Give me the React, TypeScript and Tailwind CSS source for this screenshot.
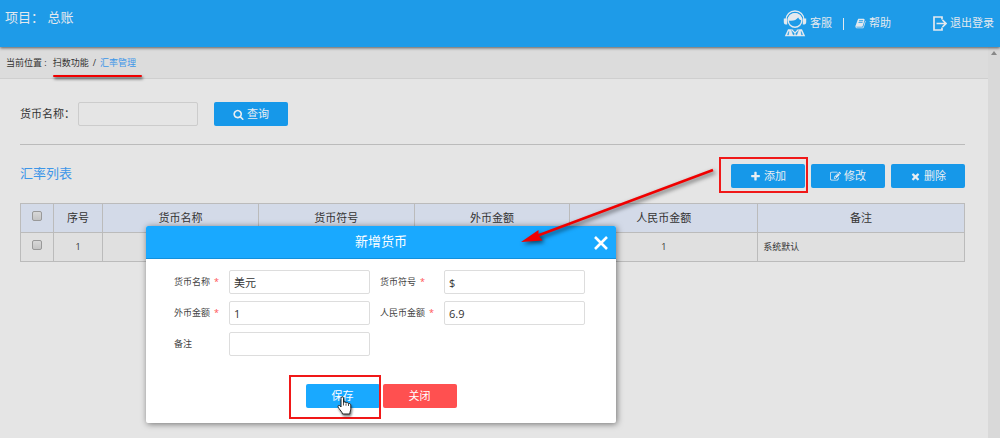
import { useState } from 'react'
import type { ReactNode } from 'react'

// ─── Icons ────────────────────────────────────────────────────────────────────

const ICON_PATHS = {
  search:
    'M1216 832q0-185-131.5-316.5t-316.5-131.5-316.5 131.5-131.5 316.5 131.5 316.5 316.5 131.5 316.5-131.5 131.5-316.5zm512 832q0 52-38 90t-90 38q-54 0-90-38l-343-342q-179 124-399 124-143 0-273.5-55.5t-225-150-150-225-55.5-273.5 55.5-273.5 150-225 225-150 273.5-55.5 273.5 55.5 225 150 150 225 55.5 273.5q0 220-124 399l343 343q37 37 37 90z',
  plus: 'M1600 736v192q0 40-28 68t-68 28h-416v416q0 40-28 68t-68 28h-192q-40 0-68-28t-28-68v-416h-416q-40 0-68-28t-28-68v-192q0-40 28-68t68-28h416v-416q0-40 28-68t68-28h192q40 0 68 28t28 68v416h416q40 0 68 28t28 68z',
  times:
    'M1490 1322q0 40-28 68l-136 136q-28 28-68 28t-68-28l-294-294-294 294q-28 28-68 28t-68-28l-136-136q-28-28-28-68t28-68l294-294-294-294q-28-28-28-68t28-68l136-136q28-28 68-28t68 28l294 294 294-294q28-28 68-28t68 28l136 136q28 28 28 68t-28 68l-294 294 294 294q28 28 28 68z',
  edit: 'M888 1184l116-116-152-152-116 116v56h96v96h56zm440-720q-16-16-33 1l-350 350q-17 17-1 33t33-1l350-350q17-17 1-33zm80 594v190q0 119-84.5 203.5t-203.5 84.5h-832q-119 0-203.5-84.5t-84.5-203.5v-832q0-119 84.5-203.5t203.5-84.5h832q63 0 117 25 15 7 18 23 3 17-9 29l-49 49q-14 14-32 8-23-6-45-6h-832q-66 0-113 47t-47 113v832q0 66 47 113t113 47h832q66 0 113-47t47-113v-126q0-13 9-22l64-64q15-15 35-7t20 29zm-96-738l288 288-672 672h-288v-288zm444 132l-92 92-288-288 92-92q28-28 68-28t68 28l152 152q28 28 28 68t-28 68z',
  book: 'M1703 478q40 57 18 129l-275 906q-19 64-76.5 107.5t-122.5 43.5h-923q-77 0-148.5-53.5t-99.5-131.5q-24-67-2-127 0-4 3-27t4-37q1-8-3-21.5t-3-19.5q2-11 8-21t16.5-23.5 16.5-23.5q23-38 45-91.5t30-91.5q3-10 .5-30t-.5-28q3-11 17-28t17-23q21-36 42-92t25-90q1-9-2.5-32t.5-28q4-13 22-30.5t22-22.5q19-26 42.5-84.5t27.5-96.5q1-8-3-25.5t-2-26.5q2-8 9-18t18-23 17-21q8-12 16.5-30.5t15-35 16-36 19.5-32 26.5-23.5 36-11.5 47.5 5.5l-1 3q38-9 51-9h761q74 0 114 56t18 130l-274 906q-36 119-71.5 153.5t-128.5 34.5h-869q-27 0-38 15-11 16-1 43 24 70 144 70h923q29 0 56-15.5t35-41.5l300-987q7-22 5-57 38 15 59 43zm-1064 2q-4 13 2 22.5t20 9.5h608q13 0 25.5-9.5t16.5-22.5l21-64q4-13-2-22.5t-20-9.5h-608q-13 0-25.5 9.5t-16.5 22.5zm-83 256q-4 13 2 22.5t20 9.5h608q13 0 25.5-9.5t16.5-22.5l21-64q4-13-2-22.5t-20-9.5h-608q-13 0-25.5 9.5t-16.5 22.5z',
}

type IconName = keyof typeof ICON_PATHS

function Icon({ name }: { name: IconName }) {
  return (
    <svg viewBox="0 0 1792 1792" className="size-[11px] shrink-0 fill-current" aria-hidden="true">
      <path d={ICON_PATHS[name]} />
    </svg>
  )
}

function AgentIcon() {
  return (
    <svg viewBox="0 0 24 27" className="h-[27px] w-6" fill="none" stroke="currentColor" aria-hidden="true">
      <path d="M3 10C3 4.500 7 1 12 1s9 3.500 9 9" strokeWidth="1.300" />
      <circle cx="12" cy="10.500" r="6.800" strokeWidth="1.400" />
      <path d="M5.200 10.500C4.800 5.500 8 3.200 12 3.200s7.200 2.300 6.800 7.300c-1.800-.4-3-1.500-3.600-3-2 2.500-5 4-10 3z" fill="currentColor" stroke="none" />
      <path d="M.8 8.500h3.400v6H2.600C1.400 14.500.8 13.500.8 12zM23.200 8.500h-3.400v6h1.600c1.200 0 1.800-1 1.800-2.500z" fill="currentColor" stroke="none" />
      <path d="M5 19.300h14l3.200 7H1.800z" fill="currentColor" stroke="none" />
      <path
        d="M8.200 19.300l2 5.500h3.600l2-5.500zM5.800 21.500l-1.300 3.300h1zM18.200 21.500l1.300 3.300h-1z"
        className="fill-[#1e9be8] stroke-[#1e9be8]"
        strokeWidth=".5"
      />
      <path d="M8.500 19.500l3.500 3.500 3.500-3.500M12 23v3" strokeWidth="1.200" />
    </svg>
  )
}

function LogoutIcon() {
  return (
    <svg viewBox="0 0 14 15" className="h-[15px] w-3.5" fill="none" stroke="currentColor" strokeWidth="1.700" aria-hidden="true">
      <path d="M9 3.500V1H1v13h8v-2.500M3.500 7.500H13M9.500 4l3.500 3.500L9.500 11" />
    </svg>
  )
}

function HandCursor() {
  return (
    <svg viewBox="0 0 15 19" className="pointer-events-none absolute left-[31px] top-3 h-[19px] w-[15px] drop-shadow-[1px_2px_1px_rgba(0,0,0,0.5)]" aria-hidden="true">
      <path
        d="M4 11V2.200C4 .3 6.500.3 6.500 2.200V6.500C7 5.600 8.800 5.800 9 7 9.800 6.200 11.300 6.600 11.500 7.700 12.400 7.200 13.800 7.800 13.800 9v3.500c0 2-.8 2.500-1 5.500H5.500c-.2-2-2.500-3.800-3.500-5.500-.6-1-1.300-2-.9-2.700.6-.9 2-.3 2.900 1.200z"
        fill="#fff"
        stroke="#222"
      />
      <path d="M6.500 6.500v3M9 7.500v2.200M11.500 8v2" stroke="#222" strokeWidth=".8" />
    </svg>
  )
}

// ─── Shared controls ──────────────────────────────────────────────────────────

const BUTTON_COLOR = {
  primary: 'bg-[#1698e9] text-[#e9eef2]',
  save: 'bg-[#19a9ff] text-white',
  danger: 'bg-[#ff5050] text-white',
}

interface ButtonProps {
  color?: keyof typeof BUTTON_COLOR
  icon?: IconName
  onClick?: () => void
  children: ReactNode
}

function Button({ color = 'primary', icon, onClick, children }: ButtonProps) {
  return (
    <button
      type="button"
      onClick={onClick}
      className={`flex h-6 w-[74px] items-center justify-center gap-[3px] rounded-xs text-[11px] ${BUTTON_COLOR[color]}`}
    >
      {icon && <Icon name={icon} />}
      {children}
    </button>
  )
}

function Checkbox({ label }: { label: string }) {
  return (
    <input
      type="checkbox"
      aria-label={label}
      className="block mx-auto mb-1 size-2.5 appearance-none rounded-xs border border-[#999] bg-linear-to-b from-[#d8d8d8] to-[#c4c4c4]"
    />
  )
}

// ─── Dialog ───────────────────────────────────────────────────────────────────

const FIELDS = [
  { id: 'name', label: '货币名称', value: '美元', required: true },
  { id: 'symbol', label: '货币符号', value: '$', required: true },
  { id: 'foreign', label: '外币金额', value: '1', required: true },
  { id: 'rmb', label: '人民币金额', value: '6.9', required: true },
  { id: 'remark', label: '备注', value: '', required: false },
]

function CurrencyDialog({ onClose }: { onClose: () => void }) {
  return (
    <section
      role="dialog"
      aria-labelledby="dialog-title"
      className="absolute left-[146px] top-[226px] w-[470px] rounded-xs bg-white shadow-[1px_1px_6px_rgba(0,0,0,0.5)]"
    >
      <header className="relative flex h-[33px] items-center justify-center rounded-t-xs border-b border-[#1290dc] bg-[#19a9ff] text-white">
        <h2 id="dialog-title" className="text-[13px]">新增货币</h2>
        <button type="button" aria-label="关闭窗口" onClick={onClose} className="absolute right-2 top-2.5">
          <svg viewBox="0 0 14 14" className="size-3.5" stroke="currentColor" strokeWidth="2.600">
            <path d="M1 1l12 12M13 1L1 13" />
          </svg>
        </button>
      </header>

      <form>
        <div className="grid grid-cols-[55px_141px_74px_141px] gap-y-[7px] pl-7 pt-[11px]">
          {FIELDS.map((field, i) => (
            <div key={field.id} className="contents">
              <label
                htmlFor={field.id}
                className={`flex items-center gap-1 text-[9px] text-[#444] ${i % 2 ? 'pl-2.5' : ''}`}
              >
                {field.label}
                {field.required && <span className="text-[#ff5050]">*</span>}
              </label>
              <input
                id={field.id}
                type="text"
                defaultValue={field.value}
                className="h-6 min-w-0 rounded-xs border border-[#ddd] px-1 text-[11px] text-[#333]"
              />
            </div>
          ))}
        </div>

        <div className="flex justify-center gap-[3px] pb-[15px] pt-7">
          <div className="relative">
            <Button color="save">保存</Button>
            <span className="pointer-events-none absolute -bottom-[11px] -left-[17px] -right-px -top-[9px] border-2 border-[#f01818]" />
            <HandCursor />
          </div>
          <Button color="danger" onClick={onClose}>关闭</Button>
        </div>
      </form>
    </section>
  )
}

// Red arrow from the add button to the dialog it opens
function Arrow() {
  return (
    <svg
      viewBox="0 0 200 84"
      className="pointer-events-none absolute left-[518px] top-[164px] h-[84px] w-[200px] drop-shadow-[2px_2px_2px_rgba(0,0,0,0.6)]"
      aria-hidden="true"
    >
      <path d="M195 6L20 71.500" stroke="#f00000" strokeWidth="2.500" />
      <path d="M3 78L20.500 66 20.500 71.500 24.500 76.500z" fill="#f00000" />
    </svg>
  )
}

// ─── Page ─────────────────────────────────────────────────────────────────────

const COLUMNS = [
  { title: '序号', width: 'w-[5.2%]' },
  { title: '货币名称', width: 'w-[16.5%]' },
  { title: '货币符号', width: 'w-[16.5%]' },
  { title: '外币金额', width: 'w-[16.5%]' },
  { title: '人民币金额', width: 'w-[19.9%]' },
  { title: '备注', width: 'w-[21.9%]' },
]

const ROWS = [['1', '', '', '', '1', '系统默认']]

export default function App() {
  const [open, setOpen] = useState(true)

  return (
    <div className="relative flex min-h-screen flex-col bg-[#e5e5e5] font-['Open_Sans','Noto_Sans_CJK_SC',sans-serif] text-[11px] text-[#333]">
      <header className="z-10 flex h-[47px] justify-between bg-[#1e9be8] pl-[5px] pr-1.5 text-[#e4e9ee] shadow-[0_1px_3px_rgba(0,0,0,0.6)]">
        <h1 className="pt-[7px] text-[13px] leading-5">项目： 总账</h1>
        <nav className="flex items-center">
          <a href="#service" className="flex items-center gap-[3px]">
            <AgentIcon />
            客服
          </a>
          <span className="mx-[11px] h-3 w-px bg-current" />
          <a href="#help" className="flex items-center gap-[3px]">
            <Icon name="book" />
            帮助
          </a>
          <a href="#logout" className="ml-[42px] flex items-center gap-[3px]">
            <LogoutIcon />
            退出登录
          </a>
        </nav>
      </header>

      <div className="flex flex-1">
        <main className="flex-1">
          <nav className="flex h-8 items-center gap-1.5 border-b border-[#cfcfcf] bg-[#dcdcdc] pl-1.5 text-[9px]">
            <span>当前位置 :</span>
            <span className="relative flex gap-1">
              <span>扫数功能</span>
              <span>/</span>
              <a href="#rate" className="text-[#3d96e8]">汇率管理</a>
              <span className="absolute -bottom-2 -right-1.5 left-0 h-0.5 rounded-full bg-[#f00000] shadow-[1px_2px_3px_rgba(0,0,0,0.7)]" />
            </span>
          </nav>

          <div className="pl-5 pr-[23px]">
            <form className="flex items-center border-b border-[#bbb] pb-[18px] pt-[23px]">
              <label htmlFor="keyword">货币名称：</label>
              <input
                id="keyword"
                type="text"
                className="ml-[3px] mr-4 h-6 w-[120px] rounded-xs border border-[#ccc] px-1"
              />
              <Button icon="search">查询</Button>
            </form>

            <div className="flex items-start justify-between pb-[15px] pt-[19px]">
              <h2 className="text-[13px] leading-[18px] text-[#3d96e8]">汇率列表</h2>
              <div className="flex gap-1.5">
                <div className="relative">
                  <Button icon="plus" onClick={() => setOpen(true)}>添加</Button>
                  <span className="pointer-events-none absolute -bottom-[5px] -left-3 -right-[3px] -top-[7px] border-2 border-[#f01818]" />
                </div>
                <Button icon="edit">修改</Button>
                <Button icon="times">删除</Button>
              </div>
            </div>

            <table className="w-full table-fixed border-collapse">
              <thead>
                <tr className="h-[29px] bg-[#d3dae8]">
                  <th className="w-[3.5%] border border-[#bbb]">
                    <Checkbox label="全选" />
                  </th>
                  {COLUMNS.map((col) => (
                    <th key={col.title} className={`border border-[#bbb] font-normal ${col.width}`}>
                      {col.title}
                    </th>
                  ))}
                </tr>
              </thead>
              <tbody>
                {ROWS.map((row) => (
                  <tr key={row[0]} className="h-[29px] bg-[#e0e0e0] text-center text-[9px]">
                    <td className="border border-[#bbb]">
                      <Checkbox label="选择" />
                    </td>
                    {row.map((cell, i) => (
                      <td
                        key={COLUMNS[i].title}
                        className={`border border-[#bbb] ${i === row.length - 1 ? 'pl-[5px] text-left' : ''}`}
                      >
                        {cell}
                      </td>
                    ))}
                  </tr>
                ))}
              </tbody>
            </table>
          </div>
        </main>

        <div className="flex w-3 justify-center bg-[#d9d9d9] pt-1">
          <svg viewBox="0 0 6 4" className="h-1 w-1.5 fill-[#888]" aria-hidden="true">
            <path d="M3 0l3 4H0z" />
          </svg>
        </div>
      </div>

      {open && <CurrencyDialog onClose={() => setOpen(false)} />}
      <Arrow />
    </div>
  )
}
